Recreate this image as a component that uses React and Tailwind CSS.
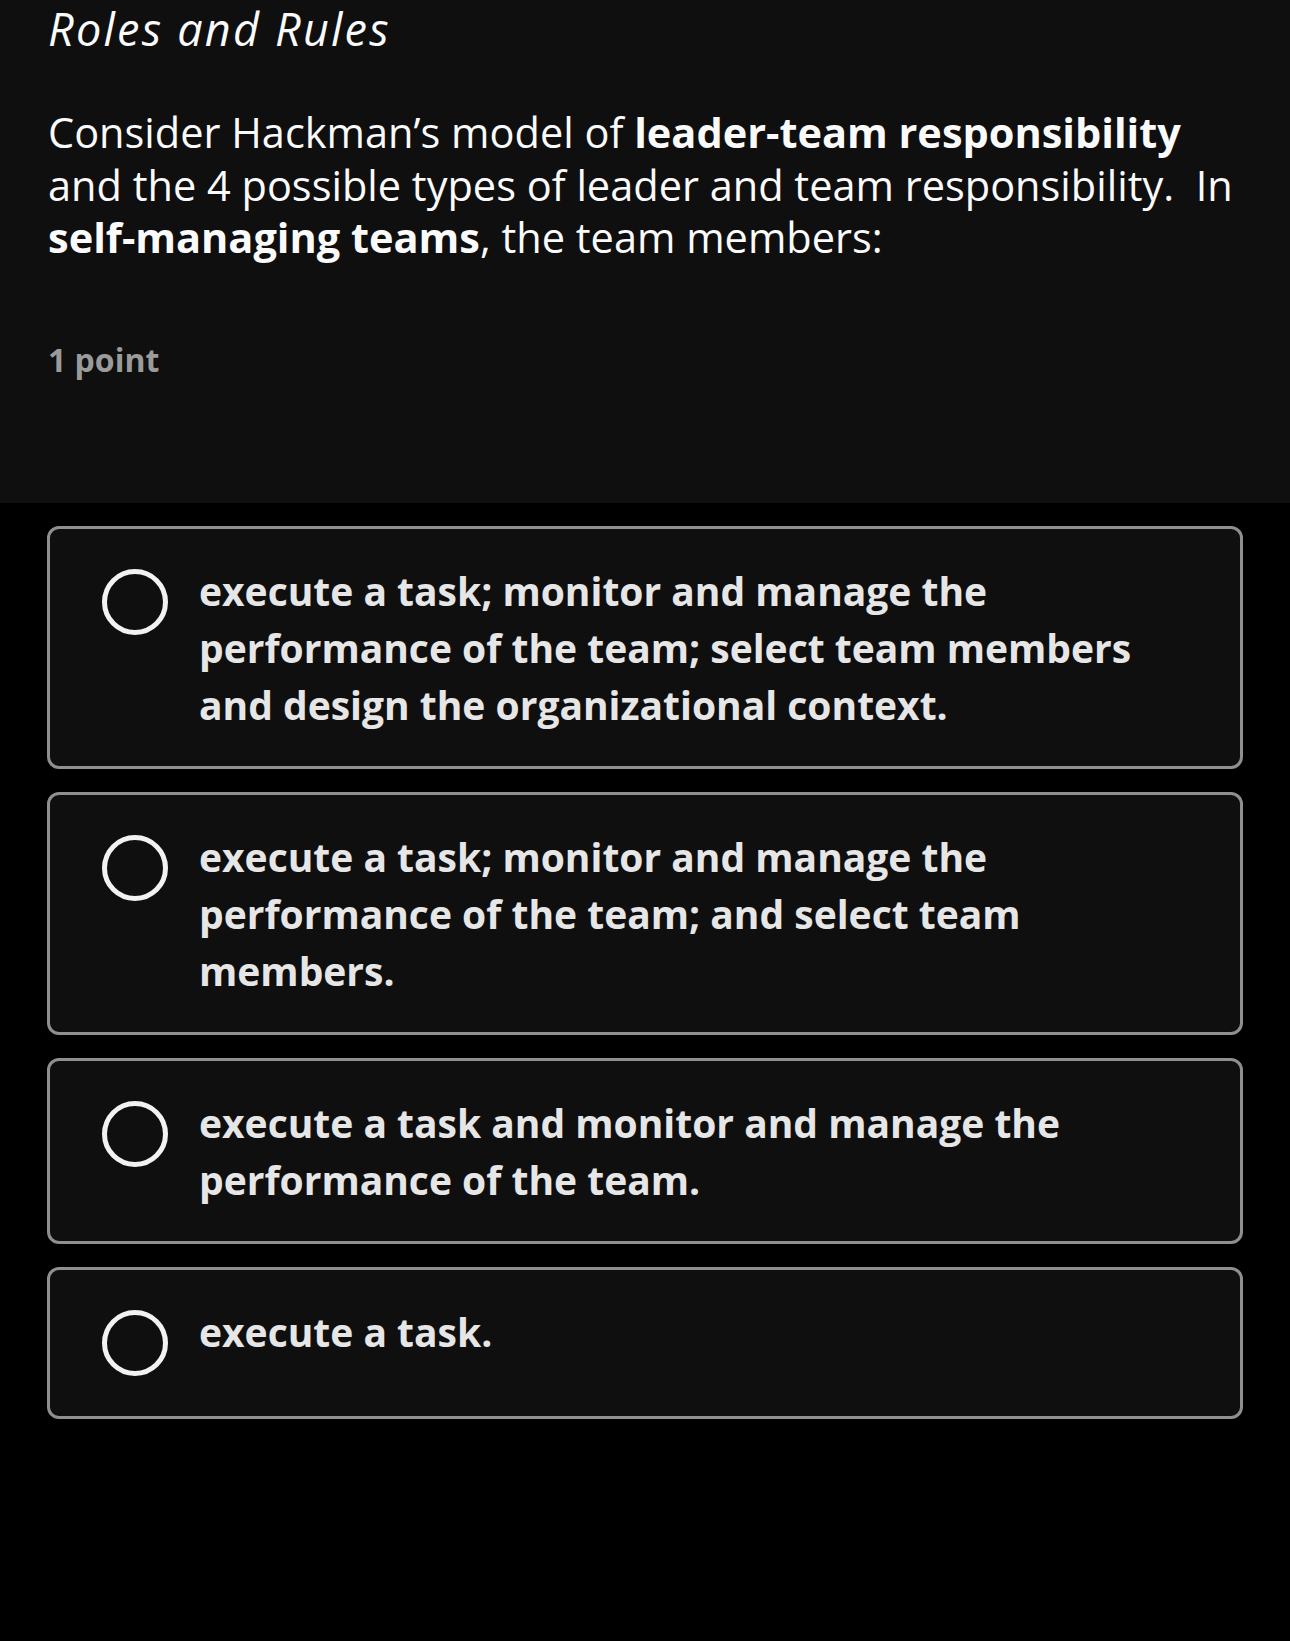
const options = [
  "execute a task; monitor and manage the performance of the team; select team members and design the organizational context.",
  "execute a task; monitor and manage the performance of the team; and select team members.",
  "execute a task and monitor and manage the performance of the team.",
  "execute a task.",
];

function Radio() {
  return (
    <div className="shrink-0 my-[7px] w-[66px] h-[66px] rounded-full border-[5px] border-[#f2f2f2]" />
  );
}

export default function App() {
  return (
    <div
      className="min-h-[1641px] bg-black"
      style={{ fontFamily: "'Open Sans', 'Noto Sans', sans-serif" }}
    >
      <div className="bg-[#0f0f0f] pl-[48px] pr-[36px] pt-[1px] pb-[123px]">
        <h1 className="text-[45px] leading-[55px] italic tracking-[2.2px] text-[#fafafa]">
          Roles and Rules
        </h1>
        <p className="mt-[50px] text-[41.5px] leading-[52.5px] text-[#fafafa]">
          Consider Hackman’s model of <b>leader-team responsibility</b> and the 4 possible
          types of leader and team responsibility.&nbsp; In <b>self-managing teams</b>, the
          team members:
        </p>
        <div className="mt-[75px] text-[32px] leading-[41px] font-bold text-[#9b9b9b]">
          1 point
        </div>
      </div>

      <div className="px-[47px] pt-[23px] flex flex-col gap-[23px]">
        {options.map((opt, i) => (
          <div
            key={i}
            className="flex items-start rounded-[12px] border-[3px] border-[#8f8f8f] bg-[#0f0f0f] pl-[52px] pr-[57px] py-[33px]"
          >
            <Radio />
            <div className="ml-[31px] text-[39px] leading-[57px] font-bold text-[#e6e6e6]">
              {opt}
            </div>
          </div>
        ))}
      </div>
    </div>
  );
}
